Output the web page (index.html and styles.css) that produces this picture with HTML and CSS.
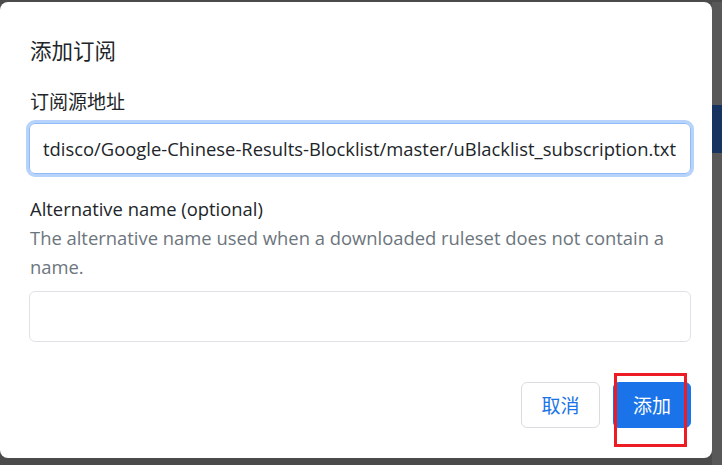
FILE: index.html
```html
<!DOCTYPE html>
<html lang="zh-CN">
<head>
<meta charset="utf-8">
<title>添加订阅</title>
<link rel="stylesheet" href="styles.css">
</head>
<body>
<div class="screen">
  <div class="dialog">
    <h5 class="title">添加订阅</h5>
    <label class="label label-url">订阅源地址</label>
    <div class="input input-focus">tdisco/Google-Chinese-Results-Blocklist/master/uBlacklist_subscription.txt</div>
    <label class="label label-alt">Alternative name (optional)</label>
    <p class="help">The alternative name used when a downloaded ruleset does not contain a name.</p>
    <div class="input input-empty"></div>
    <div class="footer">
      <button class="btn btn-cancel">取消</button>
      <button class="btn btn-add">添加</button>
      <div class="highlight"></div>
    </div>
  </div>
  <div class="side">
    <div class="side-navy"></div>
  </div>
</div>
</body>
</html>
```

FILE: styles.css
```css
html, body {
  margin: 0;
  padding: 0;
  background: #4b4b4b;
}
body {
  width: 722px;
  height: 465px;
  overflow: hidden;
  font-family: "Open Sans", "Noto Sans", "Noto Sans CJK SC", sans-serif;
  color: #212529;
}
.screen {
  display: flex;
  align-items: flex-start;
  padding-top: 2px;
}
.dialog {
  width: 712px;
  height: 456px;
  box-sizing: border-box;
  background: #fff;
  border-radius: 8px;
  padding: 33px 21px 0 29px;
  display: flex;
  flex-direction: column;
  align-items: stretch;
}
.title {
  margin: 0;
  font-family: "Noto Sans CJK SC", sans-serif;
  font-weight: 400;
  font-size: 21.5px;
  line-height: 29px;
  padding-left: 1px;
  color: #212529;
}
.label {
  display: block;
  font-size: 18.4px;
  line-height: 29px;
  padding-left: 1px;
  color: #212529;
}
.label-url {
  margin-top: 22px;
  font-family: "Noto Sans CJK SC", sans-serif;
  font-size: 19px;
}
.label-alt {
  margin-top: 20px;
}
.help {
  margin: 0;
  font-size: 18.4px;
  line-height: 29px;
  padding-left: 1px;
  color: #6c757d;
}
.input {
  box-sizing: border-box;
  height: 51px;
  border: 1px solid #dee2e6;
  border-radius: 6px;
  padding: 11px 13px;
  font-size: 18.4px;
  line-height: 27px;
  white-space: nowrap;
  overflow: hidden;
  color: #212529;
}
.input-focus {
  margin-top: 8px;
  border-color: #8fbbf8;
  box-shadow: 0 0 0 3px #b7d2fb;
}
.input-empty {
  margin-top: 10px;
}
.footer {
  position: relative;
  margin-top: 40px;
  display: flex;
  justify-content: flex-end;
  gap: 13px;
}
.btn {
  height: 46px;
  box-sizing: border-box;
  padding: 0 19px;
  border-radius: 6px;
  font-family: "Noto Sans CJK SC", sans-serif;
  font-size: 19px;
  line-height: 44px;
  cursor: pointer;
}
.btn-cancel {
  width: 79px;
  background: #fff;
  border: 1px solid #dadce0;
  color: #1a73e8;
}
.btn-add {
  width: 78px;
  background: #1a73e8;
  border: 1px solid #1a73e8;
  color: #fff;
}
.highlight {
  position: absolute;
  right: 4px;
  top: -9px;
  width: 73px;
  height: 74px;
  box-sizing: border-box;
  border: 3px solid #ed1c24;
  pointer-events: none;
}
.side {
  width: 10px;
  height: 463px;
  background: #585858;
}
.side-navy {
  margin-top: 103px;
  height: 48px;
  background: #17335f;
}
```
